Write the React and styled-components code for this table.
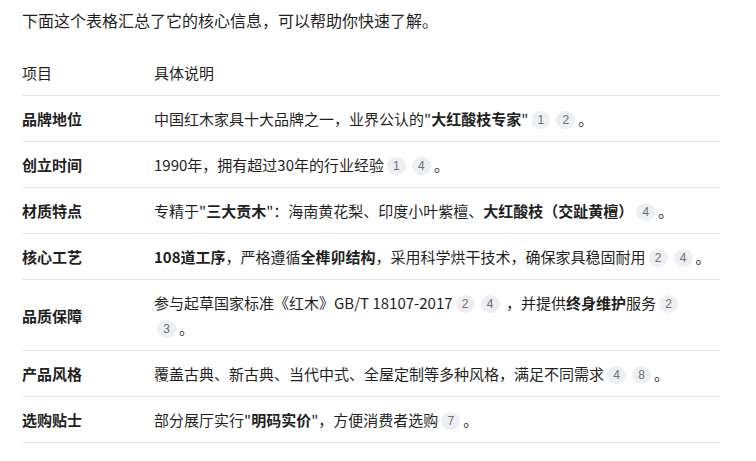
import React from "react";
import styled, { createGlobalStyle } from "styled-components";

const Global = createGlobalStyle`
  html, body { margin: 0; padding: 0; background: #fff; }
  body {
    font-family: "Noto Sans CJK SC", "Noto Sans", sans-serif;
    color: #1f1f1f;
  }
`;

const Page = styled.div`
  padding: 8px 36px 0 22px;
  width: 698px;
`;

const Intro = styled.p`
  margin: 0 0 18px;
  font-size: 16px;
  line-height: 24px;
`;

const Table = styled.table`
  width: 698px;
  border-collapse: collapse;
  font-size: 15px;
  line-height: 25px;
`;

const HeadCell = styled.th`
  text-align: left;
  font-weight: 400;
  padding: 10px 8px 10px 0;
  border-bottom: 1px solid #e4e4e4;
  width: ${(p) => (p.$first ? "124px" : "auto")};
`;

const Cell = styled.td`
  padding: 10px 8px 10px 0;
  border-bottom: 1px solid #e4e4e4;
  vertical-align: middle;
  font-weight: ${(p) => (p.$label ? 700 : 400)};
`;

const B = styled.b`
  font-weight: 700;
`;

const Tail = styled.span`
  white-space: nowrap;
`;

const Ref = styled.span`
  display: inline-flex;
  align-items: center;
  justify-content: center;
  min-width: 19px;
  height: 18px;
  padding: 0 3px;
  box-sizing: border-box;
  margin: 0 3px;
  border-radius: 9px;
  background: #edeff3;
  color: #6b6f76;
  font-family: "Liberation Sans", Arial, sans-serif;
  font-size: 12px;
  line-height: 1;
  vertical-align: 1px;
`;

const rows = [
  {
    label: "品牌地位",
    body: (
      <>
        中国红木家具十大品牌之一，业界公认的"<B>大红酸枝专家</B>"<Ref>1</Ref>
        <Tail>
          <Ref>2</Ref>。
        </Tail>
      </>
    ),
  },
  {
    label: "创立时间",
    body: (
      <>
        1990年，拥有超过30年的行业经验<Ref>1</Ref>
        <Tail>
          <Ref>4</Ref>。
        </Tail>
      </>
    ),
  },
  {
    label: "材质特点",
    body: (
      <>
        专精于"<B>三大贡木</B>"：海南黄花梨、印度小叶紫檀、<B>大红酸枝（交趾黄檀）</B>
        <Tail>
          <Ref>4</Ref>。
        </Tail>
      </>
    ),
  },
  {
    label: "核心工艺",
    body: (
      <>
        <B>108道工序</B>，严格遵循<B>全榫卯结构</B>，采用科学烘干技术，确保家具稳固耐用
        <Ref>2</Ref>
        <Tail>
          <Ref>4</Ref>。
        </Tail>
      </>
    ),
  },
  {
    label: "品质保障",
    body: (
      <>
        参与起草国家标准《红木》GB/T 18107-2017<Ref>2</Ref>
        <Ref>4</Ref> ，并提供<B>终身维护</B>服务<Ref>2</Ref>
        <Tail>
          <Ref>3</Ref>。
        </Tail>
      </>
    ),
  },
  {
    label: "产品风格",
    body: (
      <>
        覆盖古典、新古典、当代中式、全屋定制等多种风格，满足不同需求<Ref>4</Ref>
        <Tail>
          <Ref>8</Ref>。
        </Tail>
      </>
    ),
  },
  {
    label: "选购贴士",
    body: (
      <>
        部分展厅实行"<B>明码实价</B>"，方便消费者选购
        <Tail>
          <Ref>7</Ref>。
        </Tail>
      </>
    ),
  },
];

export default function App() {
  return (
    <Page>
      <Global />
      <Intro>下面这个表格汇总了它的核心信息，可以帮助你快速了解。</Intro>
      <Table>
        <thead>
          <tr>
            <HeadCell $first>项目</HeadCell>
            <HeadCell>具体说明</HeadCell>
          </tr>
        </thead>
        <tbody>
          {rows.map((r) => (
            <tr key={r.label}>
              <Cell $label>{r.label}</Cell>
              <Cell>{r.body}</Cell>
            </tr>
          ))}
        </tbody>
      </Table>
    </Page>
  );
}
